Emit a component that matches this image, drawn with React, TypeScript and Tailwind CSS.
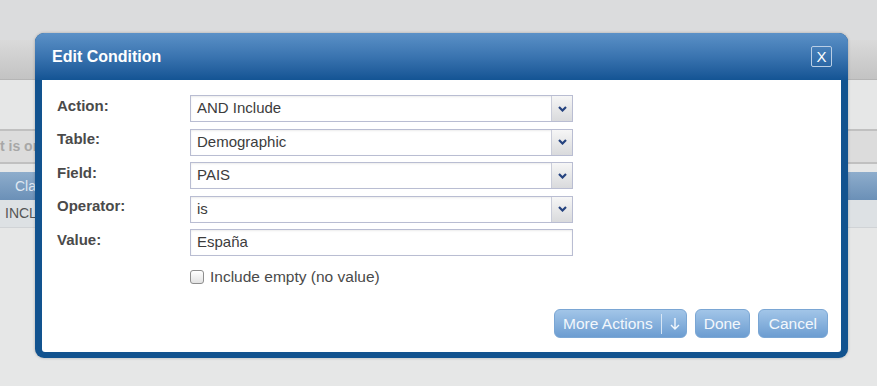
import { FC } from 'react';

const fontStack = { fontFamily: '"Liberation Sans", Arial, sans-serif' };

interface SelectProps {
  value: string;
}

const SelectBox: FC<SelectProps> = ({ value }) => {
  return (
    <div className="flex h-[27px] w-[383px] border border-[#b9bdd2] bg-white shadow-[inset_0_1px_2px_rgba(0,0,0,0.08)]">
      <div className="flex-1 flex items-center pl-[6px] text-[15px] text-[#3c3c3c]">{value}</div>
      <div className="w-[21px] flex items-center justify-center border-l border-[#c9ccd9] bg-gradient-to-b from-[#f6f6f6] to-[#d9dadc]">
        <svg width="9" height="6" viewBox="0 0 9 6">
          <path d="M1 1 L4.5 4.5 L8 1" fill="none" stroke="#25437f" strokeWidth="2.2" />
        </svg>
      </div>
    </div>
  );
};

const FormRow: FC<{ label: string; children: React.ReactNode }> = ({ label, children }) => (
  <div className="flex items-center">
    <div className="w-[133px] text-[15px] font-bold text-[#4a4a4a] -mt-[5px]">{label}</div>
    {children}
  </div>
);

const App: FC = () => {
  return (
    <div className="relative w-[877px] h-[386px] overflow-hidden bg-[#e6e7e7]" style={fontStack}>
      {/* page behind the dialog */}
      <div className="h-[40px] bg-[#dbdcdd]" />
      <div className="h-[40px] bg-gradient-to-b from-[#dadada] to-[#c3c3c3] border-b border-[#b5b5b5]" />
      <div className="h-[49px]" />
      <div className="h-[35px] flex items-center bg-[#dcdcdc] border-y-2 border-[#c0c0c0] text-[14px] font-bold text-[#a7a7a7]">
        t is on
      </div>
      <div className="h-[8px]" />
      <div className="h-[28px] flex items-center pl-[15px] bg-gradient-to-b from-[#8eadcc] to-[#6b90b7] text-[14px] text-[#dfe8f2]">
        Class
      </div>
      <div className="h-[28px] flex items-center pl-[5px] bg-[#dde1e4] border-b border-[#d0d3d6] text-[14px] text-[#555]">
        INCLUDE
      </div>

      {/* dialog */}
      <div className="absolute left-[35px] top-[33px] w-[813px] h-[325px] flex flex-col rounded-[9px] overflow-hidden bg-[#12538f] shadow-[0_0_3px_rgba(0,0,0,0.25)]">
        <div className="h-[47px] flex items-center justify-between pl-[17px] pr-[16px] bg-gradient-to-b from-[#5b91c7] via-[#3a74b0] to-[#135494]">
          <h1 className="text-[16px] font-bold text-white">Edit Condition</h1>
          <div className="w-[21px] h-[21px] flex items-center justify-center border-[1.5px] border-[#b9cee5] rounded-[2px] text-[15px] leading-none text-white">
            X
          </div>
        </div>
        <div className="flex-1 flex flex-col mx-[7px] mb-[6px] bg-white rounded-b-[3px] pl-[15px] pr-[13px] pt-[15px] pb-[14px]">
          <div className="flex flex-col gap-[6.5px]">
            <FormRow label="Action:">
              <SelectBox value="AND Include" />
            </FormRow>
            <FormRow label="Table:">
              <SelectBox value="Demographic" />
            </FormRow>
            <FormRow label="Field:">
              <SelectBox value="PAIS" />
            </FormRow>
            <FormRow label="Operator:">
              <SelectBox value="is" />
            </FormRow>
            <FormRow label="Value:">
              <div className="flex items-center h-[27px] w-[383px] border border-[#b9bdd2] bg-white pl-[6px] text-[15px] text-[#3c3c3c] shadow-[inset_0_1px_2px_rgba(0,0,0,0.08)]">
                España
              </div>
            </FormRow>
          </div>
          <div className="flex items-center mt-[9px] ml-[133px]">
            <div className="w-[14px] h-[14px] rounded-[3px] border border-[#8e8e8e] bg-gradient-to-b from-white to-[#e2e2e2]" />
            <span className="ml-[6px] text-[15.5px] text-[#4a4a4a]">Include empty (no value)</span>
          </div>
          <div className="flex-1" />
          <div className="flex justify-end gap-[8px]">
            <button className="h-[29px] flex items-center pl-[8px] pr-[6px] rounded-[6px] border border-[#7aa6d4] bg-gradient-to-b from-[#a2c5e8] to-[#6c9dd1] text-[15.5px] text-[#f2f7fc]">
              More Actions
              <span className="mx-[8px] w-px h-[20px] bg-[#d7e6f5]" />
              <svg width="10" height="14" viewBox="0 0 10 14">
                <path d="M5 1 V12 M1 8 L5 12 L9 8" fill="none" stroke="#f2f7fc" strokeWidth="1.4" />
              </svg>
            </button>
            <button className="h-[29px] px-[8px] rounded-[6px] border border-[#7aa6d4] bg-gradient-to-b from-[#a2c5e8] to-[#6c9dd1] text-[15.5px] text-[#f2f7fc]">
              Done
            </button>
            <button className="h-[29px] px-[10px] rounded-[6px] border border-[#7aa6d4] bg-gradient-to-b from-[#a2c5e8] to-[#6c9dd1] text-[15.5px] text-[#f2f7fc]">
              Cancel
            </button>
          </div>
        </div>
      </div>
    </div>
  );
};

export default App;
